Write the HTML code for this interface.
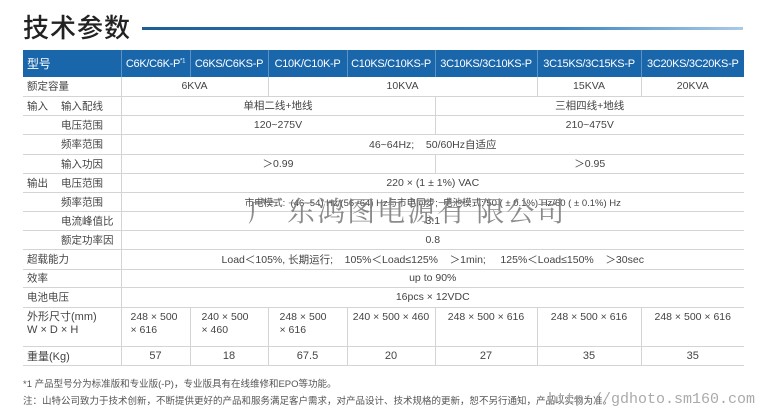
<!DOCTYPE html>
<html><head><meta charset="utf-8"><style>
body{margin:0;width:770px;height:417px;background:#fff;position:relative;overflow:hidden;font-family:"Liberation Sans","Noto Sans CJK SC",sans-serif;color:#444}
.t{position:absolute;left:23px;top:8px;font-size:26px;color:#222;letter-spacing:1px;font-family:"Noto Sans CJK SC",sans-serif;font-weight:500}
.ln{position:absolute;left:142px;top:27px;width:601px;height:3px;background:linear-gradient(90deg,#1d5e97,#3c86c0 70%,#a9cbe6)}
table{position:absolute;left:23px;top:50px;border-collapse:collapse;table-layout:fixed;width:721px;font-size:10.5px}
td{padding:0;border-bottom:1px solid #d4d4d4;text-align:center;white-space:nowrap;overflow:hidden}
td.v{border-left:1px solid #d4d4d4}
tr.h td{background:#1a66ab;color:#fff;font-size:11px;letter-spacing:-0.3px;height:27px;border-left:1px solid #5c93c6;border-bottom:none;overflow:visible}
tr.h td:first-child{text-align:left;padding-left:4px;border-left:none;font-size:12px}
td.l{text-align:left;position:relative}
td.l span{position:absolute;top:50%;transform:translateY(-50%)}
.a{left:4px}.b{left:38px}
.wm{position:absolute;left:248px;top:190px;font-size:28px;color:#777;letter-spacing:2px;font-family:"Noto Serif CJK SC",serif;opacity:.85}
.fn{position:absolute;left:23px;font-size:9.5px;color:#555}
.url{position:absolute;left:548px;top:391px;font-family:"Liberation Mono",monospace;font-size:15px;color:#aaa}
</style></head><body>
<div class="t">技术参数</div><div class="ln"></div>
<table>
<colgroup><col style="width:98px"><col style="width:69px"><col style="width:78px"><col style="width:79px"><col style="width:88px"><col style="width:102px"><col style="width:104px"><col style="width:103px"></colgroup>
<tr class="h"><td>型号</td><td>C6K/C6K-P<sup style="font-size:6px">*1</sup></td><td>C6KS/C6KS-P</td><td>C10K/C10K-P</td><td>C10KS/C10KS-P</td><td>3C10KS/3C10KS-P</td><td>3C15KS/3C15KS-P</td><td>3C20KS/3C20KS-P</td></tr>
<tr style="height:19px"><td class="l"><span class="a">额定容量</span></td><td class="v" colspan="2">6KVA</td><td class="v" colspan="3">10KVA</td><td class="v">15KVA</td><td class="v">20KVA</td></tr>
<tr style="height:19px"><td class="l"><span class="a">输入</span><span class="b">输入配线</span></td><td class="v" colspan="4">单相二线+地线</td><td class="v" colspan="3">三相四线+地线</td></tr>
<tr style="height:19px"><td class="l"><span class="b">电压范围</span></td><td class="v" colspan="4">120~275V</td><td class="v" colspan="3">210~475V</td></tr>
<tr style="height:20px"><td class="l"><span class="b">频率范围</span></td><td class="v" colspan="7">46~64Hz;&nbsp;&nbsp;&nbsp; 50/60Hz自适应</td></tr>
<tr style="height:19px"><td class="l"><span class="b">输入功因</span></td><td class="v" colspan="4">＞0.99</td><td class="v" colspan="3">＞0.95</td></tr>
<tr style="height:19px"><td class="l"><span class="a">输出</span><span class="b">电压范围</span></td><td class="v" colspan="7">220 × (1 ± 1%) VAC</td></tr>
<tr style="height:19px"><td class="l"><span class="b">频率范围</span></td><td class="v" colspan="7" style="font-size:9.5px">市电模式:&nbsp; (46~54) Hz/(56~64) Hz与市电同步;&nbsp; 电池模式: 50 ( ± 0.1%) Hz/60 ( ± 0.1%) Hz</td></tr>
<tr style="height:19px"><td class="l"><span class="b">电流峰值比</span></td><td class="v" colspan="7">3:1</td></tr>
<tr style="height:19px"><td class="l"><span class="b">额定功率因</span></td><td class="v" colspan="7">0.8</td></tr>
<tr style="height:20px"><td class="l"><span class="a">超载能力</span></td><td class="v" colspan="7">Load＜105%, 长期运行;&nbsp;&nbsp;&nbsp; 105%＜Load≤125%&nbsp;&nbsp;&nbsp; ＞1min;&nbsp;&nbsp;&nbsp;&nbsp; 125%＜Load≤150%&nbsp;&nbsp;&nbsp; ＞30sec</td></tr>
<tr style="height:18px"><td class="l"><span class="a">效率</span></td><td class="v" colspan="7">up to 90%</td></tr>
<tr style="height:20px"><td class="l"><span class="a">电池电压</span></td><td class="v" colspan="7">16pcs × 12VDC</td></tr>
<tr style="height:39px;vertical-align:top"><td class="l" style="line-height:13px;padding:3px 0 0 4px;font-size:11px">外形尺寸(mm)<br>W × D × H</td><td class="v" style="text-align:left;padding:3px 0 0 9px;line-height:13px">248 × 500<br>× 616</td><td class="v" style="text-align:left;padding:3px 0 0 11px;line-height:13px">240 × 500<br>× 460</td><td class="v" style="text-align:left;padding:3px 0 0 11px;line-height:13px">248 × 500<br>× 616</td><td class="v" style="padding-top:3px">240 × 500 × 460</td><td class="v" style="padding-top:3px">248 × 500 × 616</td><td class="v" style="padding-top:3px">248 × 500 × 616</td><td class="v" style="padding-top:3px">248 × 500 × 616</td></tr>
<tr style="height:19px;font-size:11px"><td class="l"><span class="a">重量(Kg)</span></td><td class="v">57</td><td class="v">18</td><td class="v">67.5</td><td class="v">20</td><td class="v">27</td><td class="v">35</td><td class="v">35</td></tr>
</table>
<div class="wm">广 东鸿图电源有 限公司</div>
<div class="fn" style="top:376px">*1 产品型号分为标准版和专业版(-P)，专业版具有在线维修和EPO等功能。</div>
<div class="fn" style="top:393px">注：山特公司致力于技术创新，不断提供更好的产品和服务满足客户需求，对产品设计、技术规格的更新，恕不另行通知，产品以实物为准。</div>
<div class="url">http://gdhoto.sm160.com</div>
</body></html>
